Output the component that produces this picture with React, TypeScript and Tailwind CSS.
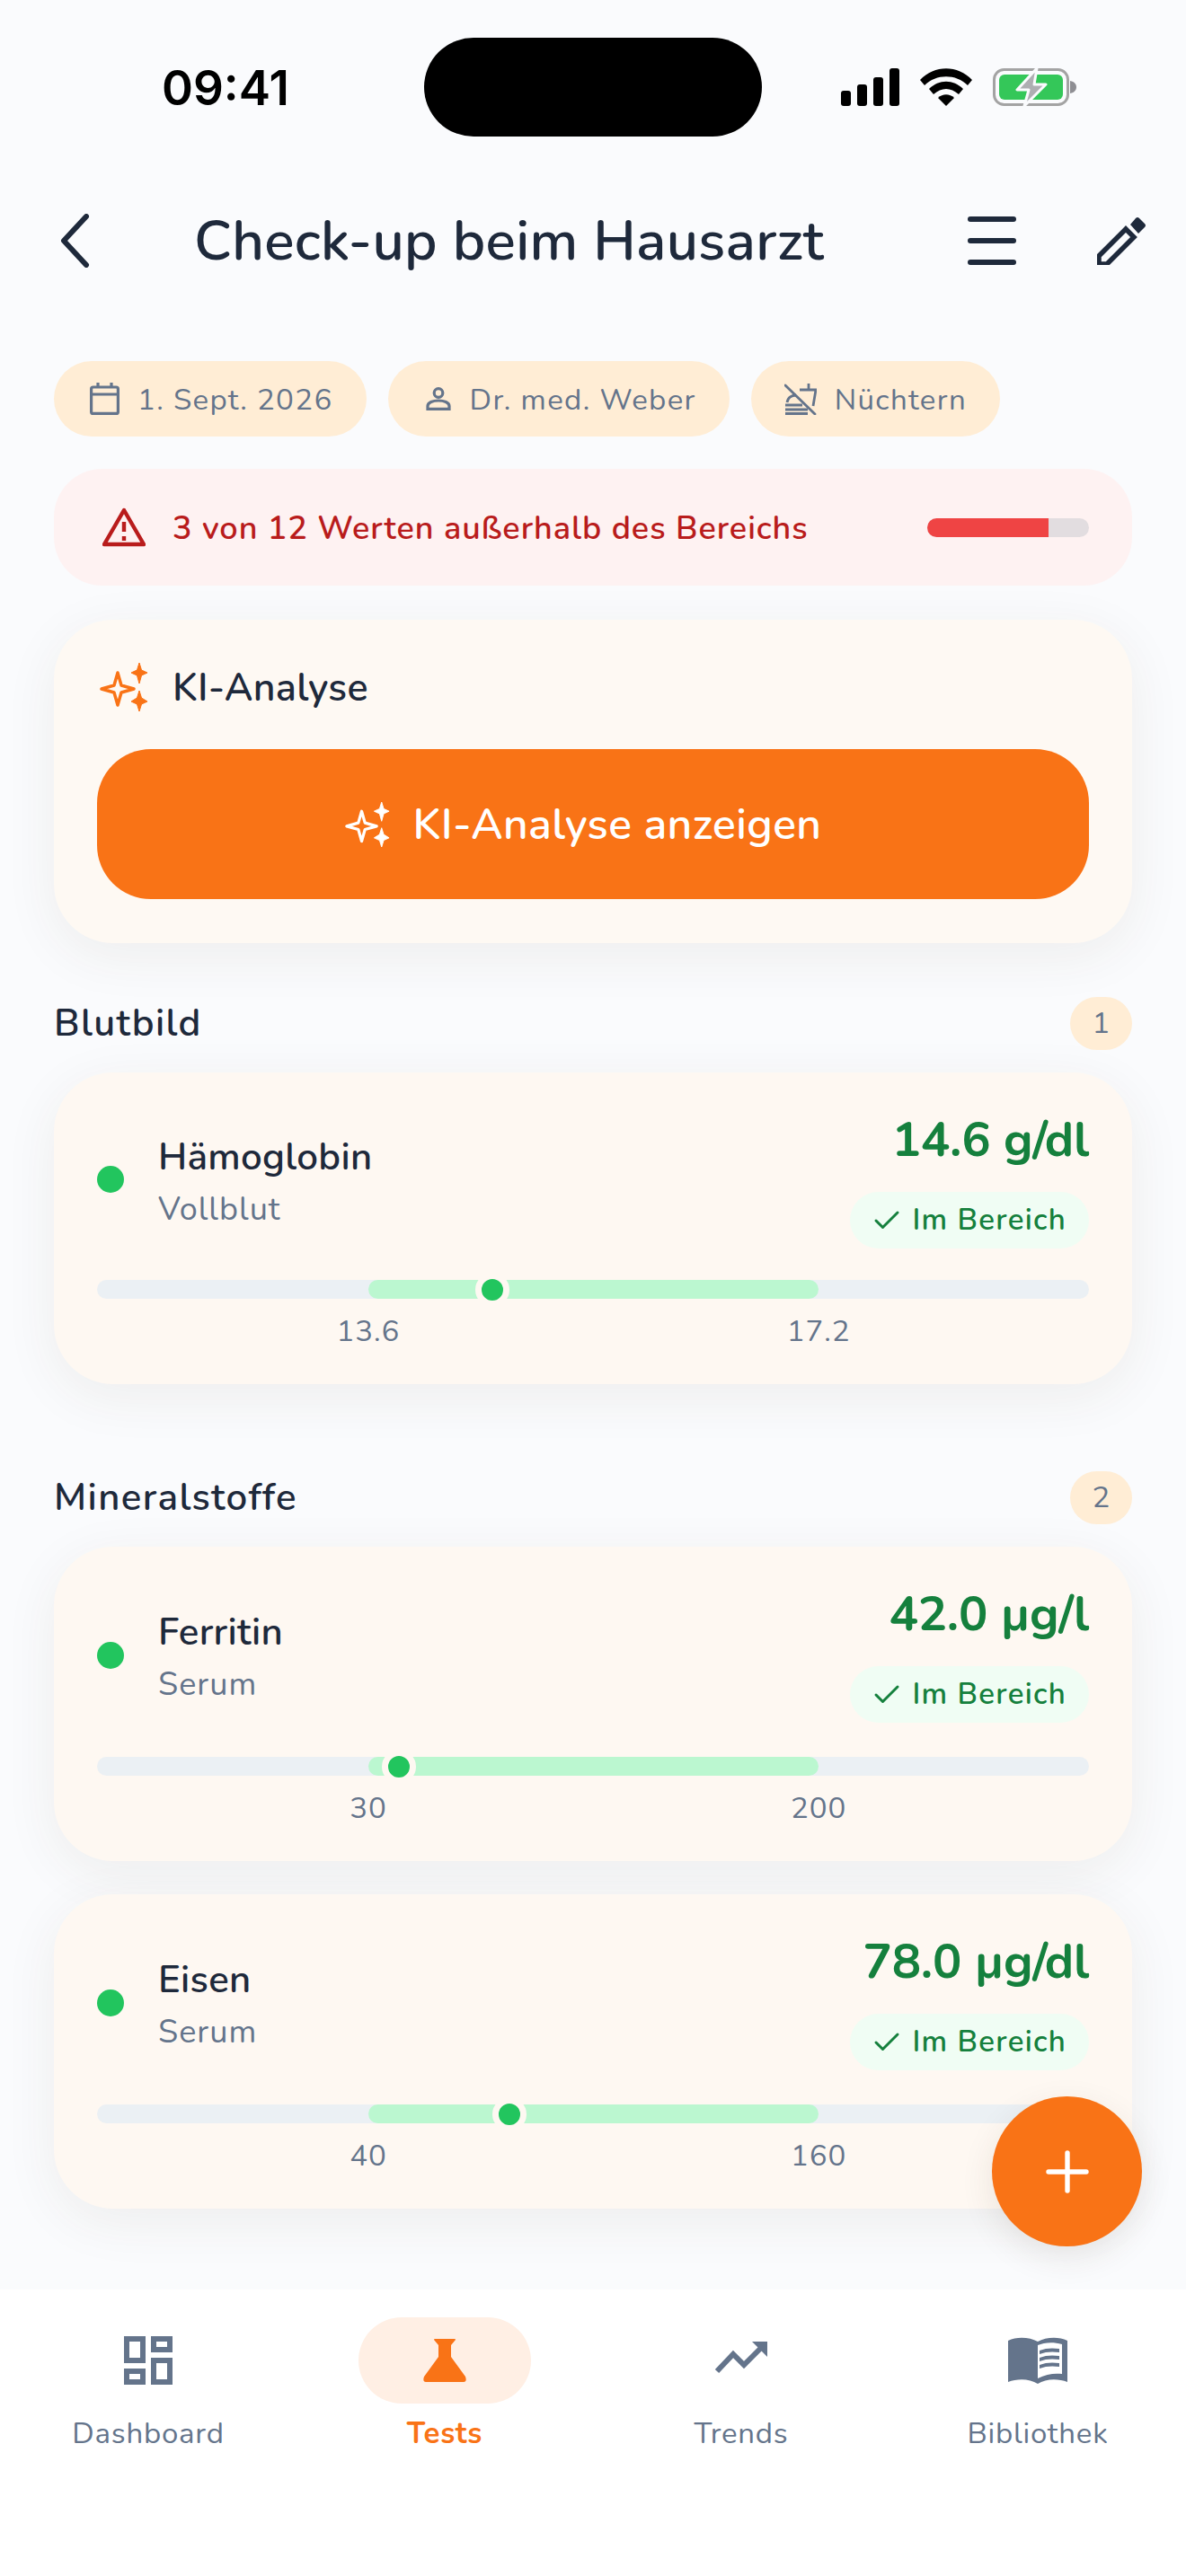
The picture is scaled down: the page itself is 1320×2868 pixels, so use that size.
import { Check, Plus } from "lucide-react";

function Sparkles({ className }: { className?: string }) {
  return (
    <svg viewBox="0 0 54 54" className={className} fill="none" stroke="currentColor" strokeWidth={3.5} strokeLinejoin="round">
      <path d="M20 11 L24 25 L38 29 L24 33 L20 47 L16 33 L2 29 L16 25 Z" />
      <path d="M44 0 L46.5 8 L53 11 L46.5 14 L44 23 L41.5 14 L35 11 L41.5 8 Z" fill="currentColor" strokeWidth={1} />
      <path d="M44 31 L46.5 39 L53 43 L46.5 46 L44 54 L41.5 46 L35 43 L41.5 39 Z" fill="currentColor" strokeWidth={1} />
    </svg>
  );
}

function StatusIcons() {
  return (
    <div className="flex items-center gap-[23px]">
      <svg width="65" height="42" viewBox="0 0 65 42" fill="#000">
        <rect x="0" y="25" width="11" height="17" rx="3" />
        <rect x="18" y="18" width="11" height="24" rx="3" />
        <rect x="36" y="10" width="11" height="32" rx="3" />
        <rect x="54" y="0" width="11" height="42" rx="3" />
      </svg>
      <svg width="58" height="42" viewBox="0 0 58 42" fill="#000">
        <path d="M0 13 C16 -4 42 -4 58 13 L53 19 C40 6 18 6 5 19 Z" />
        <path d="M10 23 C21 12 37 12 48 23 L43 29 C34 21 24 21 15 29 Z" />
        <path d="M20 33 C25 28 33 28 38 33 L29 42 Z" />
      </svg>
      <svg width="94" height="44" viewBox="0 0 94 44">
        <rect x="1.5" y="2.5" width="82" height="39" rx="11" fill="none" stroke="#a3a3a3" strokeWidth="3" />
        <rect x="7" y="8" width="71" height="28" rx="6" fill="#34c759" />
        <path d="M86 15 C91 16 93 19 93 22 C93 25 91 28 86 29 Z" fill="#8e8e93" />
        <path d="M49 1 L27 25 L40 25 L35 43 L59 19 L46 19 Z" fill="#aeaeb2" stroke="#fafbfd" strokeWidth="3" strokeLinejoin="round" />
      </svg>
    </div>
  );
}

function Chip({ icon, label }: { icon: React.ReactNode; label: string }) {
  return (
    <div className="flex h-[84px] items-center gap-[20px] rounded-full bg-[#ffedd5] pl-[37px] pr-[37px]">
      {icon}
      <span className="pt-[4px] text-[33px] tracking-[1.35px] text-[#64748b]">{label}</span>
    </div>
  );
}

type TestRow = {
  name: string;
  sub: string;
  value: string;
  low: string;
  high: string;
  marker: number;
};

function TestCard({ row, tall }: { row: TestRow; tall?: boolean }) {
  return (
    <div className="flex flex-col rounded-[66px] bg-[#fef8f2] px-[48px] pb-[38px] pt-[42px] shadow-[0_14px_60px_rgba(70,50,30,0.07)]">
      <div className={`flex items-start ${tall ? "h-[157px]" : "h-[154px]"}`}>
        <div className="flex h-full items-center">
          <div className="h-[30px] w-[30px] shrink-0 rounded-full bg-[#22c55e]" />
          <div className="ml-[38px] flex flex-col pt-[4px]">
            <span className="text-[42px] leading-[56px] font-semibold tracking-[0.3px] text-[#1e293b]">{row.name}</span>
            <span className="mt-[7px] text-[36px] leading-[46px] tracking-[1px] text-[#64748b]">{row.sub}</span>
          </div>
        </div>
        <div className="ml-auto flex flex-col items-end">
          <span className="text-[54px] leading-[66px] font-bold tracking-[-0.2px] text-[#15803d]">{row.value}</span>
          <div className="mt-[25px] flex h-[63px] items-center gap-[10px] rounded-full bg-[#f0fdf4] pl-[23px] pr-[25px]">
            <Check className="h-[36px] w-[36px] text-[#15803d]" strokeWidth={2} />
            <span className="text-[33px] font-semibold tracking-[1.3px] text-[#15803d]">Im Bereich</span>
          </div>
        </div>
      </div>
      <div className="relative mt-[35px] h-[21px] rounded-full bg-[#ebf0f4]">
        <div className="absolute left-[27.35%] top-0 h-full w-[45.4%] rounded-full bg-[#bbf7d0]" />
        <div
          className="absolute top-1/2 h-[38px] w-[38px] -translate-x-1/2 -translate-y-1/2 rounded-full border-[7px] border-[#fef8f2] bg-[#22c55e]"
          style={{ left: `${row.marker}%` }}
        />
      </div>
      <div className="relative mt-[17px] h-[40px] text-[33px] leading-[40px] tracking-[1px] text-[#64748b]">
        <span className="absolute left-[27.35%] -translate-x-1/2">{row.low}</span>
        <span className="absolute left-[72.75%] -translate-x-1/2">{row.high}</span>
      </div>
    </div>
  );
}

function SectionHead({ title, count }: { title: string; count: number }) {
  return (
    <div className="flex h-[59px] items-center justify-between">
      <span className="text-[42px] font-semibold tracking-[1.4px] text-[#1e293b]">{title}</span>
      <span className="flex h-[59px] w-[69px] items-center justify-center rounded-full bg-[#ffedd5] text-[33px] text-[#64748b]">{count}</span>
    </div>
  );
}

function NavItem({ label, icon, active }: { label: string; icon: React.ReactNode; active?: boolean }) {
  return (
    <div className="flex flex-1 flex-col items-center">
      <div className={`flex h-[96px] w-[192px] items-center justify-center rounded-full ${active ? "bg-[#ffefe4]" : ""}`}>{icon}</div>
      <span className={`mt-[12px] text-[33px] leading-[44px] tracking-[0.75px] ${active ? "font-bold text-[#f97316]" : "text-[#64748b]"}`}>{label}</span>
    </div>
  );
}

export default function App() {
  const sections: { title: string; rows: TestRow[] }[] = [
    {
      title: "Blutbild",
      rows: [{ name: "Hämoglobin", sub: "Vollblut", value: "14.6 g/dl", low: "13.6", high: "17.2", marker: 39.9 }],
    },
    {
      title: "Mineralstoffe",
      rows: [
        { name: "Ferritin", sub: "Serum", value: "42.0 µg/l", low: "30", high: "200", marker: 30.4 },
        { name: "Eisen", sub: "Serum", value: "78.0 µg/dl", low: "40", high: "160", marker: 41.6 },
      ],
    },
  ];

  return (
    <div className="relative flex h-[2868px] w-[1320px] flex-col overflow-hidden bg-[#fafbfd] font-['Nunito','Lato','Noto_Sans',sans-serif]">
      {/* status bar */}
      <div className="flex h-[194px] shrink-0 items-start pl-[180px] pr-[121px]">
        <span className="mt-[70px] w-[292px] font-['Inter',sans-serif] text-[53px] leading-[56px] font-semibold text-black">09:41</span>
        <div className="mt-[42px] h-[110px] w-[376px] rounded-full bg-black" />
        <div className="ml-auto mt-[75px]"><StatusIcons /></div>
      </div>

      {/* header */}
      <div className="flex h-[148px] shrink-0 items-center px-[60px]">
        <svg width="44" height="60" viewBox="0 0 44 60" fill="none" stroke="#1e293b" strokeWidth="6" strokeLinecap="round" strokeLinejoin="round" className="ml-[6px]">
          <path d="M30 3 L5 30 L30 57" />
        </svg>
        <span className="ml-[106px] text-[62px] font-semibold tracking-[0.3px] whitespace-nowrap text-[#1e293b]">Check-up beim Hausarzt</span>
        <div className="ml-auto flex items-center gap-[90px]">
          <svg width="54" height="54" viewBox="0 0 54 54" fill="#1e293b">
            <rect x="0" y="0" width="54" height="6" rx="3" />
            <rect x="0" y="24" width="54" height="6" rx="3" />
            <rect x="0" y="48" width="54" height="6" rx="3" />
          </svg>
          <svg width="54" height="54" viewBox="0 0 54 54" fill="none" className="-mr-[15px]">
            <path d="M2 44 L32 14 L41 23 L11 53 L2 53 Z" stroke="#1e293b" strokeWidth="5.5" />
            <path d="M37 9 L43 2 Q45 0 47 2 L53 8 Q55 10 53 12 L46 19 Z" fill="#1e293b" />
          </svg>
        </div>
      </div>

      <div className="flex flex-col px-[60px] pt-[60px]">
        {/* chips */}
        <div className="flex gap-[24px]">
          <Chip
            label="1. Sept. 2026"
            icon={
              <svg width="33" height="36" viewBox="0 0 33 36" fill="none" stroke="#64748b" strokeWidth="3.2" className="ml-[3px]">
                <rect x="1.6" y="5" width="29.8" height="29.4" rx="2" />
                <path d="M2 13 H31 M9 0 V5 M24 0 V5" />
              </svg>
            }
          />
          <Chip
            label="Dr. med. Weber"
            icon={
              <svg width="30" height="26" viewBox="0 0 30 26" fill="none" stroke="#64748b" strokeWidth="3.2" className="ml-[4px]">
                <circle cx="15" cy="6.5" r="4.8" />
                <path d="M3 24.4 V21 C3 17 9 15 15 15 C21 15 27 17 27 21 V24.4 Z" />
              </svg>
            }
          />
          <Chip
            label="Nüchtern"
            icon={
              <svg width="36" height="36" viewBox="0 0 36 36" fill="none" stroke="#64748b" strokeWidth="2.8">
                <path d="M1 3 L34 35" strokeLinecap="round" />
                <path d="M17 8 H35 L32 26 M27 1 V8 M1 25 H20 M1 30 H26 M1 34.5 H26" />
                <path d="M3 22 C4 16 9 14 13 14" />
              </svg>
            }
          />
        </div>

        {/* out of range banner */}
        <div className="mt-[36px] flex h-[130px] items-center rounded-[54px] bg-[#fef2f2] pl-[54px] pr-[48px]">
          <svg width="48" height="44" viewBox="0 0 48 44" fill="none" stroke="#b91c1c" strokeWidth="4.4" strokeLinejoin="round">
            <path d="M24 3 L46 41 H2 Z" />
            <path d="M24 16 V27 M24 32 V37" />
          </svg>
          <span className="ml-[30px] pt-[4px] text-[36px] font-semibold tracking-[0.95px] text-[#b91c1c]">3 von 12 Werten außerhalb des Bereichs</span>
          <div className="ml-auto h-[21px] w-[180px] overflow-hidden rounded-full bg-[#e2dde0]">
            <div className="h-full w-[75%] bg-[#ef4444]" />
          </div>
        </div>

        {/* AI card */}
        <div className="mt-[38px] flex h-[360px] flex-col rounded-[66px] bg-[#fef9f3] px-[48px] pt-[48px] shadow-[0_14px_60px_rgba(70,50,30,0.07)]">
          <div className="flex h-[54px] items-center">
            <Sparkles className="ml-[3px] h-[54px] w-[54px] text-[#f97316]" />
            <span className="ml-[27px] pt-[2px] text-[43px] font-semibold tracking-[0.3px] text-[#1e293b]">KI-Analyse</span>
          </div>
          <button className="mt-[42px] flex h-[167px] items-center justify-center gap-[26px] rounded-[60px] bg-[#f97316] pr-[22px]">
            <Sparkles className="h-[50px] w-[50px] text-white" />
            <span className="text-[48px] font-semibold tracking-[0.4px] text-white">KI-Analyse anzeigen</span>
          </button>
        </div>

        {/* test sections */}
        {sections.map((section, i) => (
          <div key={section.title} className={i === 0 ? "mt-[60px]" : "mt-[97px]"}>
            <SectionHead title={section.title} count={i + 1} />
            <div className="mt-[25px] flex flex-col gap-[37px]">
              {section.rows.map((row) => (
                <TestCard key={row.name} row={row} tall={i === 1} />
              ))}
            </div>
          </div>
        ))}
      </div>

      {/* add button */}
      <div className="absolute top-[2334px] left-[1104px] flex h-[167px] w-[167px] items-center justify-center rounded-full bg-[#f97316] shadow-[0_12px_36px_rgba(70,50,30,0.1)]">
        <Plus className="h-[72px] w-[72px] text-white" strokeWidth={1.8} />
      </div>

      {/* bottom nav */}
      <div className="absolute top-[2549px] left-0 flex h-[319px] w-full bg-white pt-[31px]">
        <NavItem
          label="Dashboard"
          icon={
            <svg width="54" height="54" viewBox="0 0 54 54" fill="#64748b" fillRule="evenodd">
              <path d="M0 0 H24 V30 H0 Z M6 6 V24 H18 V6 Z" />
              <path d="M30 0 H54 V18 H30 Z M36 6 V12 H48 V6 Z" />
              <path d="M0 36 H24 V54 H0 Z M6 42 V48 H18 V42 Z" />
              <path d="M30 24 H54 V54 H30 Z M36 30 V48 H48 V30 Z" />
            </svg>
          }
        />
        <NavItem
          active
          label="Tests"
          icon={
            <svg width="48" height="48" viewBox="0 0 48 48" fill="#f97316">
              <path d="M13 0 H35 Q36 0 36 1 L31 7 V20 L47 42 Q49 48 45 48 H3 Q-1 48 1 42 L17 20 V7 L12 1 Q12 0 13 0 Z" />
            </svg>
          }
        />
        <NavItem
          label="Trends"
          icon={
            <svg width="60" height="36" viewBox="0 0 60 36" fill="none" className="translate-y-[-3px]">
              <path d="M3 33 L21 14 L33 26 L52 7" stroke="#64748b" strokeWidth="6" />
              <path d="M42 0 H59 V17 Z" fill="#64748b" />
            </svg>
          }
        />
        <NavItem
          label="Bibliothek"
          icon={
            <svg width="66" height="52" viewBox="0 0 66 52" fill="#64748b" fillRule="evenodd">
              <path d="M0 4 C10 -1 24 0 33 5 C42 0 56 -1 66 4 V50 C56 46 42 46 33 52 C24 46 10 46 0 50 Z M33 9 V46 C42 41 52 40 60 41 V8 C50 5 40 6 33 9 Z" />
              <path d="M35 15 C42 12 50 12 57 13 V17 C50 16 42 16 35 19 Z M35 23 C42 20 50 20 57 21 V25 C50 24 42 24 35 27 Z M35 31 C42 28 50 28 57 29 V33 C50 32 42 32 35 35 Z" />
            </svg>
          }
        />
      </div>
    </div>
  );
}
